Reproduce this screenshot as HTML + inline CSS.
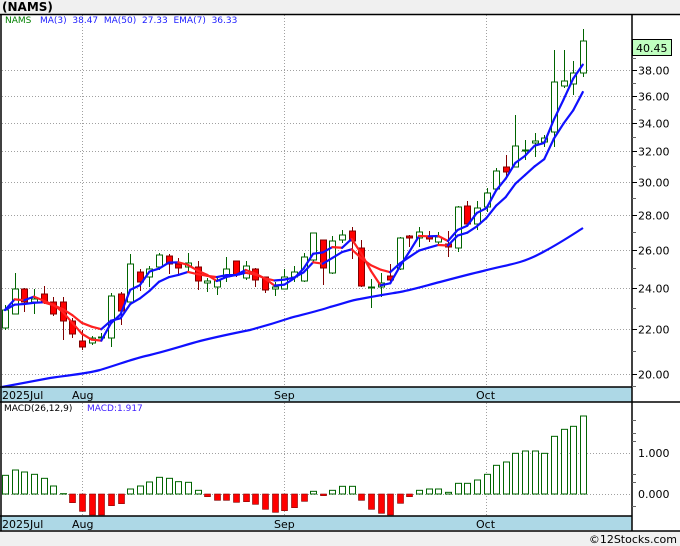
<!DOCTYPE html>
<html><head><meta charset="utf-8"><style>
html,body{margin:0;padding:0;background:#f0f0f0;width:680px;height:546px;overflow:hidden}
svg{display:block}
</style></head><body>
<svg id="s" width="680" height="546" xmlns="http://www.w3.org/2000/svg" font-family="DejaVu Sans, Liberation Sans, sans-serif">
<rect x="0" y="0" width="680" height="546" fill="#f0f0f0"/>
<rect x="0" y="14" width="680" height="517" fill="#fff"/>
<text x="2" y="11" font-size="12" font-weight="bold" fill="#000">(NAMS)</text>
<g id="grid" stroke="#a0a0a0" stroke-width="1" stroke-dasharray="1,2"></g>
<rect x="0" y="387" width="632" height="15" fill="#add8e6"/>
<rect x="0" y="516" width="632" height="14" fill="#add8e6"/>
<g id="plot"></g>
<g stroke="#000" stroke-width="1.5" fill="none">
<line x1="0" y1="14.5" x2="680" y2="14.5"/>
<line x1="1" y1="14" x2="1" y2="531"/>
<line x1="632" y1="14" x2="632" y2="531"/>
<line x1="0" y1="387" x2="632" y2="387"/>
<line x1="0" y1="402" x2="680" y2="402"/>
<line x1="0" y1="516" x2="632" y2="516"/>
<line x1="0" y1="531" x2="680" y2="531"/>
</g>
<g id="axis" font-size="11" fill="#000"></g>
<rect x="632.5" y="39.5" width="39" height="16" fill="#c0ffc0" stroke="#000"/>
<text x="636" y="52" font-size="11">40.45</text>
<text x="5" y="23" font-size="9" fill="#008000">NAMS</text>
<text x="40" y="23" font-size="9" fill="#2020ff" xml:space="preserve">MA(3)  38.47  MA(50)  27.33  EMA(7)  36.33</text>
<text x="4" y="411" font-size="9" fill="#000">MACD(26,12,9)</text>
<text x="87" y="411" font-size="9" fill="#4020ff">MACD:1.917</text>
<g font-size="11" fill="#000">
<text x="2" y="399">2025Jul</text><text x="72" y="399">Aug</text><text x="274" y="399">Sep</text><text x="476" y="399">Oct</text>
<text x="2" y="528">2025Jul</text><text x="72" y="528">Aug</text><text x="274" y="528">Sep</text><text x="476" y="528">Oct</text>
</g>
<text x="677" y="543" font-size="11" fill="#000" text-anchor="end">©12Stocks.com</text>
</svg>
<script>
var NS="http://www.w3.org/2000/svg";
function el(p,t,a){var e=document.createElementNS(NS,t);for(var k in a)e.setAttribute(k,a[k]);p.appendChild(e);return e;}
var grid=document.getElementById('grid'),plot=document.getElementById('plot'),axis=document.getElementById('axis');
function py(p){return 1792.8-473.6*Math.log(p);}
[38,36,34,32,30,28,26,24,22,20].forEach(function(p){var y=Math.round(py(p))+.5;el(grid,'line',{x1:2,y1:y,x2:632,y2:y});el(axis,'text',{x:638,y:y+4}).textContent=p.toFixed(2);el(axis,'line',{x1:632,y1:y,x2:637,y2:y,stroke:'#000'});});
[39,37,35,33,31,29,27,25,23,21,19.5].forEach(function(p){var y=Math.round(py(p))+.5;el(axis,'line',{x1:632,y1:y,x2:636,y2:y,stroke:'#666'});});
[82.5,284.5,486.5].forEach(function(x){el(grid,'line',{x1:x,y1:15,x2:x,y2:387});el(grid,'line',{x1:x,y1:403,x2:x,y2:516});});
[453.5,494.5].forEach(function(y){el(grid,'line',{x1:2,y1:y,x2:632,y2:y});});
el(axis,'text',{x:638,y:457}).textContent='1.000';
el(axis,'text',{x:638,y:498}).textContent='0.000';
[420,433,441,474,482,506].forEach(function(y){el(axis,'line',{x1:632,y1:y+.5,x2:636,y2:y+.5,stroke:'#666'});});
// candles: [wickTop, bodyTop, bodyBot, wickBot, green?]
var C=[[305,310,328,330,1],[273,289,314,314,1],[288,289,302,312,0],[289,299,302,314,1],[286,294,301,304,0],[297,302,314,316,0],[297,302,321,340,0],[318,321,334,338,0],[330,341,347,350,0],[336,338,343,345,1],[333,337,338,341,1],[293,296,338,347,1],[292,294,311,325,0],[254,264,302,302,1],[269,272,282,291,0],[266,269,277,287,1],[253,255,267,270,1],[254,256,264,274,0],[258,264,268,274,0],[253,263,267,273,1],[261,267,281,290,0],[278,281,283,292,1],[278,281,287,295,1],[257,269,277,282,1],[261,261,275,277,0],[261,266,278,280,1],[268,269,280,287,0],[277,277,290,293,0],[282,287,289,296,1],[269,277,289,289,1],[266,272,277,282,1],[253,257,281,282,1],[233,233,260,262,1],[240,240,268,285,0],[236,241,273,274,1],[230,235,240,243,1],[227,231,241,259,0],[240,248,286,287,0],[279,287,288,308,1],[273,283,287,297,1],[264,276,280,284,0],[237,238,269,270,1],[235,236,238,247,0],[227,232,238,247,1],[231,236,239,242,0],[232,237,242,246,1],[231,244,247,257,0],[206,207,248,252,1],[201,206,224,226,0],[201,208,224,230,1],[188,193,207,212,1],[168,171,189,190,1],[155,167,172,178,0],[115,146,167,167,1],[140,150,150,160,1],[133,141,143,157,1],[135,138,142,147,1],[50,82,132,147,1],[50,81,86,88,1],[61,73,84,95,1],[29,41,73,77,1]];
function X(i){return 5+9.63*i;}
var close=C.map(function(c){return c[4]?c[1]:c[2];});
C.forEach(function(c,i){var x=Math.round(X(i))+.5;var g=c[4];var col=g?'#006400':'#800000';
el(plot,'line',{x1:x,y1:c[0],x2:x,y2:c[3],stroke:col,'stroke-width':1});
var h=Math.max(c[2]-c[1],1);
el(plot,'rect',{x:x-3,y:c[1],width:6,height:h,fill:g?'#fff':'#ff0000',stroke:col,'stroke-width':1});});
// MA3 and EMA7 in price space
var cp=close.map(function(y){return Math.exp((1792.8-y)/473.6);});
var ma3=[],ema=[];var e=cp[0];
cp.forEach(function(p,i){var a=cp.slice(Math.max(0,i-2),i+1);ma3.push(a.reduce(function(s,v){return s+v;},0)/a.length);e=i==0?p:e+(p-e)*0.25;ema.push(e);});
function drawLine(arr){for(var i=1;i<arr.length;i++){var y0=py(arr[i-1]),y1=py(arr[i]);el(plot,'line',{x1:X(i-1),y1:y0,x2:X(i),y2:y1,stroke:y1>y0+0.3?'#ff2020':'#1010ff','stroke-width':2.2,'stroke-linecap':'round'});}}
drawLine(ema);drawLine(ma3);
// MA50
el(plot,'path',{d:'M2,387 L50,378 C70,375 85,374 100,370 C120,364 135,358 150,355 C170,350 185,345 200,341 C220,336 235,333 250,330 C265,326 278,322 290,318 C305,314 318,311 330,307 C345,303 352,300 360,299 C375,296 388,294 400,292 C415,289 428,285 440,282 C455,278 470,274 483,271 C498,267 510,265 520,262 C530,259 538,255 545,251 C560,243 572,235 583,228',fill:'none',stroke:'#1010ff','stroke-width':2.2});
// MACD
var M=[286,270,276,283,295,318,341,368,394,405,405,377,371,327,318,306,292,295,305,307,331,350,361,361,367,365,373,388,397,392,383,364,334,347,331,319,319,361,388,400,405,370,350,331,327,327,337,310,310,300,283,256,246,220,213,213,220,169,148,139,108];
M.forEach(function(z,i){var y=380+z/3;var x=Math.round(X(i))-3+.5;var pos=y<494;
if(pos){el(plot,'rect',{x:x,y:y,width:6,height:494-y,fill:'#fff',stroke:'#006400'});}
else{el(plot,'rect',{x:x,y:494,width:6,height:Math.max(y-494,1),fill:'#ff0000',stroke:'#800000','stroke-width':0.6});}});
</script>
</body></html>
